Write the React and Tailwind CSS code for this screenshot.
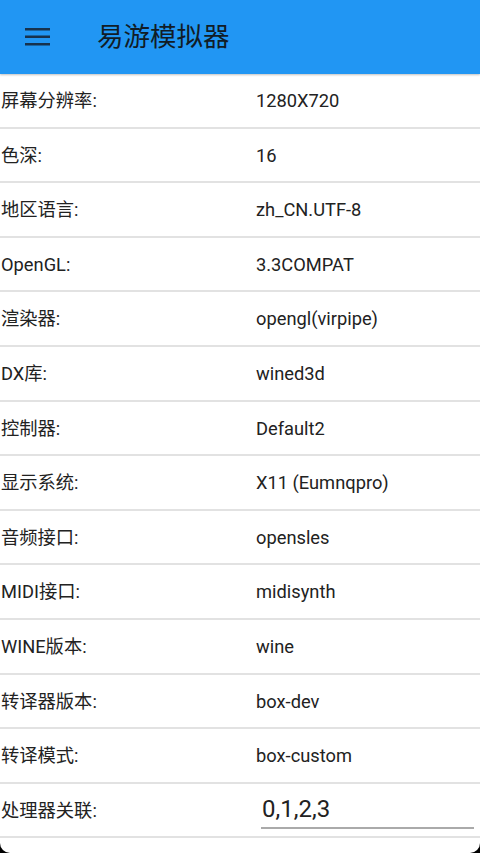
import React from "react";

const rows = [
  ["屏幕分辨率:", "1280X720"],
  ["色深:", "16"],
  ["地区语言:", "zh_CN.UTF-8"],
  ["OpenGL:", "3.3COMPAT"],
  ["渲染器:", "opengl(virpipe)"],
  ["DX库:", "wined3d"],
  ["控制器:", "Default2"],
  ["显示系统:", "X11 (Eumnqpro)"],
  ["音频接口:", "opensles"],
  ["MIDI接口:", "midisynth"],
  ["WINE版本:", "wine"],
  ["转译器版本:", "box-dev"],
  ["转译模式:", "box-custom"],
];

const font = { fontFamily: 'Roboto, "Noto Sans CJK SC", sans-serif' };

export default function App() {
  return (
    <div className="w-[480px] h-[853px] bg-black overflow-hidden" style={font}>
      <div className="w-full h-full bg-white rounded-b-[10px] overflow-hidden flex flex-col">
        <div className="h-[74px] bg-[#2196f3] flex items-center shrink-0 shadow-[0_1px_2px_rgba(0,0,0,0.25)]">
          <svg width="26" height="20" viewBox="0 0 26 20" className="ml-[25px]">
            <rect x="0" y="1" width="25" height="2.5" fill="#17324d" />
            <rect x="0" y="8.5" width="25" height="2.5" fill="#17324d" />
            <rect x="0" y="16" width="25" height="2.5" fill="#17324d" />
          </svg>
          <div className="ml-[46px] text-[26.5px] text-[#111c26] leading-none">易游模拟器</div>
        </div>
        {rows.map(([k, v]) => (
          <div key={k} className="h-[54.6px] shrink-0 border-b-2 border-[#e2e2e2] flex items-center pt-[1px] text-[18.3px] text-[#222]">
            <div className="w-[256px] pl-[1px]">{k}</div>
            <div>{v}</div>
          </div>
        ))}
        <div className="h-[54.6px] shrink-0 border-b-2 border-[#e2e2e2] flex items-center text-[18.3px] text-[#222]">
          <div className="w-[261px] pl-[1px] pt-[1px]">处理器关联:</div>
          <div className="w-[213px] h-[46px] mb-[8px] border-b-2 border-[#aaaaaa] flex items-end pb-[6px] pl-[1px] text-[24px] leading-none">0,1,2,3</div>
        </div>
      </div>
    </div>
  );
}
